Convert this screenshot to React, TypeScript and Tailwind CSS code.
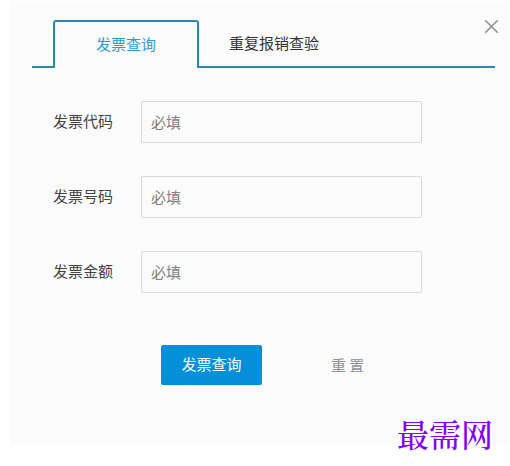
import React from "react";

const fields = [
    { id: 'code', label: '发票代码' },
    { id: 'number', label: '发票号码' },
    { id: 'amount', label: '发票金额' }
]

const App: React.FC = () => {
    return (
        <div className="min-h-screen bg-white pl-[10px] pr-px pt-px pb-5 font-['Noto_Sans_CJK_SC',sans-serif] text-[#444]">
            <div className="relative bg-[#fbfbfb] pl-[22px] pr-[14px] pt-[19px] pb-[60px]">
                <button type="button" aria-label="关闭" className="absolute right-[10px] top-[18px]">
                    <svg width="15" height="15" viewBox="0 0 15 15" fill="none" stroke="#929292" strokeWidth="1.6">
                        <path d="M1.2 1.2 13.8 13.8M13.8 1.2 1.2 13.8" />
                    </svg>
                </button>

                <div role="tablist" className="flex h-12">
                    <span className="w-[23px] rounded-br-[3px] border-b-2 border-[#2c88ad]" />
                    <button
                        type="button"
                        role="tab"
                        aria-selected="true"
                        className="-ml-[2px] w-[146px] rounded-t-[3px] border-2 border-b-0 border-[#2c88ad] pb-[2px] text-[15px] text-[#2d9bcd]"
                    >
                        发票查询
                    </button>
                    <div className="-ml-[2px] flex flex-1 rounded-bl-[3px] border-b-2 border-[#2c88ad]">
                        <button type="button" role="tab" aria-selected="false" className="px-8 text-[15px] text-[#333]">
                            重复报销查验
                        </button>
                    </div>
                </div>

                <form className="mt-[33px] pl-[21px]">
                    <div className="flex flex-col gap-[33px]">
                        {fields.map((field) => (
                            <div key={field.id} className="flex items-center">
                                <label htmlFor={field.id} className="w-[88px] shrink-0 pb-[2px] text-[15px]">{field.label}</label>
                                <input
                                    id={field.id}
                                    type="text"
                                    placeholder="必填"
                                    className="h-[42px] w-full max-w-[281px] rounded-[2px] border border-[#d9d9d9] bg-transparent px-[9px] pb-[2px] text-[15px] placeholder:text-[#808080]"
                                />
                            </div>
                        ))}
                    </div>
                    <div className="mt-[52px] flex items-center gap-[49px] pl-[108px]">
                        <button type="submit" className="h-10 w-[101px] rounded-[2px] bg-[#048fd9] pb-[2px] text-[15px] text-white">
                            发票查询
                        </button>
                        <button type="reset" className="h-10 px-5 text-[15px] text-[#929292]">重 置</button>
                    </div>
                </form>

                <p className="absolute -bottom-3 right-4 font-['Noto_Serif_CJK_SC','Noto_Serif_CJK_JP',serif] text-[32px] font-medium leading-[48px] text-[#8000ff]">
                    最需网
                </p>
            </div>
        </div>
    )
};

export default App;
